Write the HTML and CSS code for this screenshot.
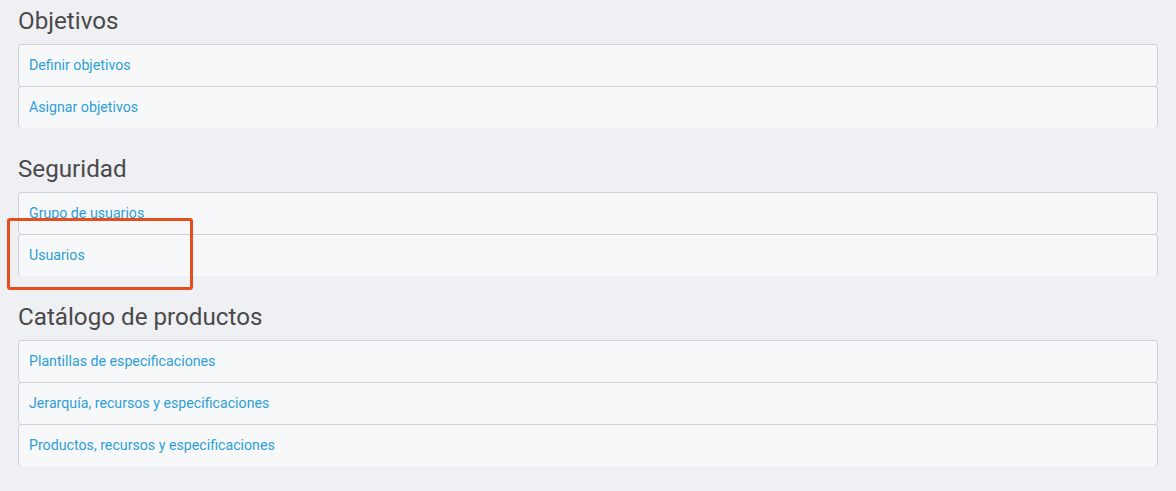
FILE: index.html
```html
<!DOCTYPE html>
<html lang="es">
<head>
<meta charset="utf-8">
<title>Configuración</title>
<link rel="stylesheet" href="styles.css">
</head>
<body>
<main class="page">
  <section class="group">
    <h2 class="group-title">Objetivos</h2>
    <ul class="list">
      <li class="item"><a href="#">Definir objetivos</a></li>
      <li class="item"><a href="#">Asignar objetivos</a></li>
    </ul>
  </section>
  <section class="group">
    <h2 class="group-title">Seguridad</h2>
    <ul class="list">
      <li class="item"><a href="#">Grupo de usuarios</a></li>
      <li class="item highlighted"><a href="#">Usuarios</a><span class="mark"></span></li>
    </ul>
  </section>
  <section class="group">
    <h2 class="group-title">Catálogo de productos</h2>
    <ul class="list">
      <li class="item"><a href="#">Plantillas de especificaciones</a></li>
      <li class="item"><a href="#">Jerarquía, recursos y especificaciones</a></li>
      <li class="item"><a href="#">Productos, recursos y especificaciones</a></li>
    </ul>
  </section>
</main>
</body>
</html>
```
FILE: styles.css
```css
html, body {
  margin: 0;
  padding: 0;
  background: #eff0f4;
  font-family: Roboto, "Liberation Sans", Arial, sans-serif;
}
.page {
  padding: 0 18px;
}
.group {
  margin-bottom: 20px;
}
.group-title {
  margin: 0;
  padding: 7px 0 9px;
  height: 28px;
  font-size: 24.2px;
  line-height: 28px;
  font-weight: 400;
  color: #4a4a4a;
}
.list {
  list-style: none;
  margin: 0;
  padding: 0;
}
.item {
  position: relative;
  height: 41px;
  box-sizing: border-box;
  height: 42px;
  border: 1px solid #cfd0d3;
  border-bottom-width: 0;
  border-radius: 4px;
  background: #f7f8fa;
  padding: 0 10px 2px;
  display: flex;
  align-items: center;
}
.item a {
  color: #2d9fd6;
  text-decoration: none;
  font-size: 14.2px;
}
.mark {
  position: absolute;
  left: -12px;
  top: -17px;
  width: 180px;
  height: 66px;
  border: 3px solid #e84e1c;
  border-radius: 3px;
  pointer-events: none;
}
```
